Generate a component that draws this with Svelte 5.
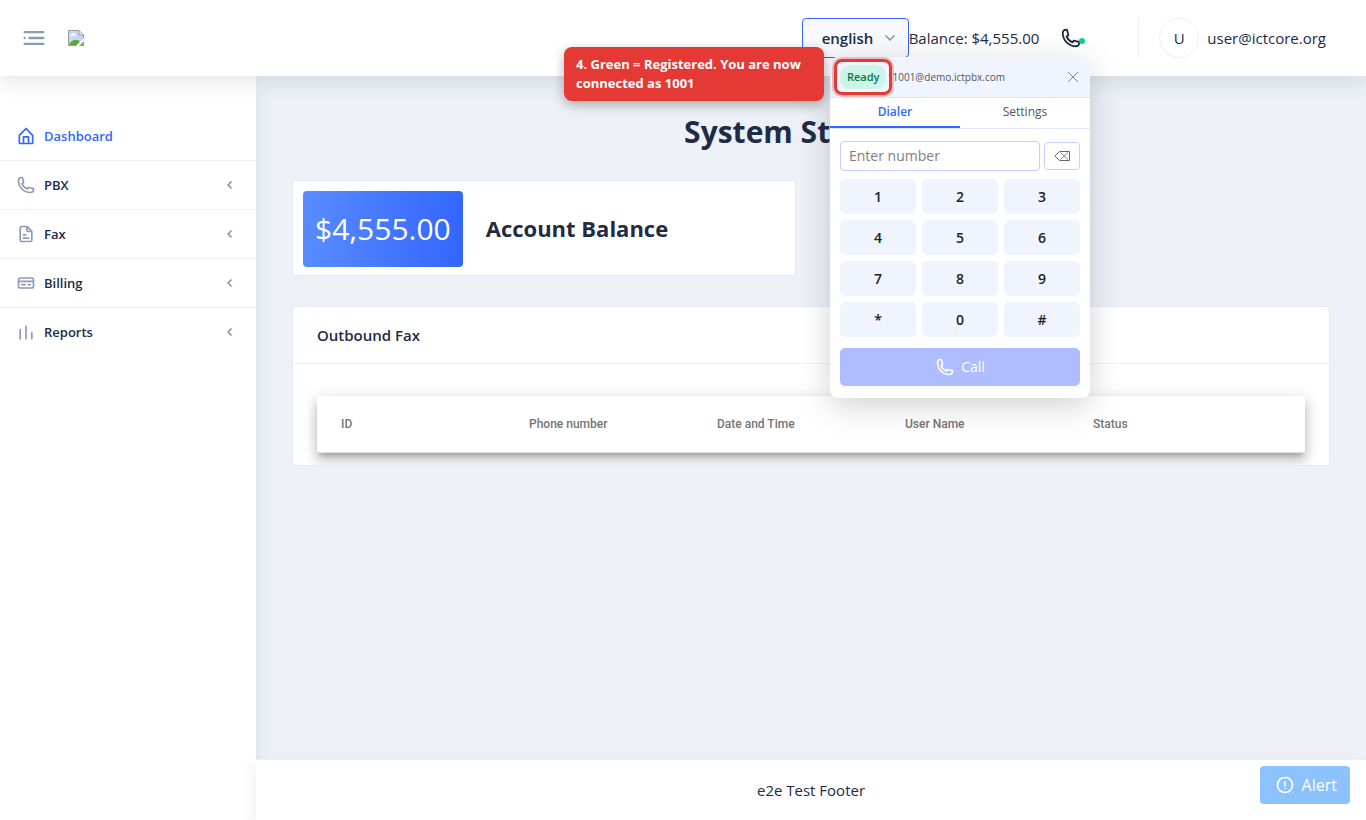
<script>
  let number = $state('');
  let language = $state('english');
  let tab = $state('Dialer');

  const phone =
    'M17.4 22A15.42 15.42 0 0 1 2 6.6 4.6 4.6 0 0 1 6.6 2a3.94 3.94 0 0 1 .77.07 3.79 3.79 0 0 1 .72.18 1 1 0 0 1 .65.75l1.37 6a1 1 0 0 1-.26.92c-.13.14-.14.15-1.37.79a9.91 9.91 0 0 0 4.87 4.89c.65-1.24.66-1.25.8-1.38a1 1 0 0 1 .92-.26l6 1.37a1 1 0 0 1 .72.65 4.34 4.34 0 0 1 .19.73 4.77 4.77 0 0 1 .06.76A4.6 4.6 0 0 1 17.4 22zM6.6 4A2.61 2.61 0 0 0 4 6.6 13.41 13.41 0 0 0 17.4 20a2.61 2.61 0 0 0 2.6-2.6v-.33L15.36 16l-.29.55c-.45.87-.78 1.5-1.62 1.16a11.85 11.85 0 0 1-7.18-7.21c-.36-.78.32-1.14 1.18-1.59L8 8.64 6.93 4z';

  const menu = [
    {
      title: 'Dashboard',
      active: true,
      icon: 'M20.42 10.18L12.71 2.3a1 1 0 0 0-1.42 0l-7.71 7.89A2 2 0 0 0 3 11.62V20a2 2 0 0 0 1.89 2h14.22A2 2 0 0 0 21 20v-8.38a2.07 2.07 0 0 0-.58-1.44zM10 20v-6h4v6zm9 0h-3v-7a1 1 0 0 0-1-1H9a1 1 0 0 0-1 1v7H5v-8.42l7-7.15 7 7.19z'
    },
    { title: 'PBX', icon: phone },
    {
      title: 'Fax',
      icon: 'M15 16H9a1 1 0 0 0 0 2h6a1 1 0 0 0 0-2zM9 14h3a1 1 0 0 0 0-2H9a1 1 0 0 0 0 2zM19.74 8.33l-5.44-6a1 1 0 0 0-.74-.33h-7A2.53 2.53 0 0 0 4 4.5v15A2.53 2.53 0 0 0 6.56 22h10.88A2.53 2.53 0 0 0 20 19.5V9a1 1 0 0 0-.26-.67zM14 5l2.74 3h-2a.79.79 0 0 1-.74-.85zm3.44 15H6.56a.53.53 0 0 1-.56-.5v-15a.53.53 0 0 1 .56-.5H12v3.15A2.79 2.79 0 0 0 14.71 10H18v9.5a.53.53 0 0 1-.56.5z'
    },
    {
      title: 'Billing',
      icon: 'M19 5H5a3 3 0 0 0-3 3v8a3 3 0 0 0 3 3h14a3 3 0 0 0 3-3V8a3 3 0 0 0-3-3zM4 8a1 1 0 0 1 1-1h14a1 1 0 0 1 1 1v1H4zm16 8a1 1 0 0 1-1 1H5a1 1 0 0 1-1-1v-5h16zM7 15h4a1 1 0 0 0 0-2H7a1 1 0 0 0 0 2zM15 15h2a1 1 0 0 0 0-2h-2a1 1 0 0 0 0 2z'
    },
    {
      title: 'Reports',
      icon: 'M12 4a1 1 0 0 0-1 1v15a1 1 0 0 0 2 0V5a1 1 0 0 0-1-1zM19 12a1 1 0 0 0-1 1v7a1 1 0 0 0 2 0v-7a1 1 0 0 0-1-1zM5 8a1 1 0 0 0-1 1v11a1 1 0 0 0 2 0V9a1 1 0 0 0-1-1z'
    }
  ];
  const columns = ['ID', 'Phone number', 'Date and Time', 'User Name', 'Status'];
  const keys = ['1', '2', '3', '4', '5', '6', '7', '8', '9', '*', '0', '#'];
</script>

<div class="layout">
  <header class="topbar">
    <div class="brand">
      <button class="plain" aria-label="Toggle menu">
        <svg width="28" height="28" viewBox="0 0 24 24" fill="#8f9bb3">
          <circle cx="4" cy="12" r="1" />
          <rect x="7" y="11" width="14" height="2" rx=".94" />
          <rect x="3" y="16" width="18" height="2" rx=".94" />
          <rect x="3" y="6" width="18" height="2" rx=".94" />
        </svg>
      </button>
      <a class="logo" href="#home" aria-label="Home">
        <svg width="16" height="16" viewBox="0 0 16 16">
          <path d="M.5.5h10.500l4.500 4.500v10.500H.5z" fill="#c6d9fb" />
          <path d="M2.500 5.800a1.400 1.400 0 0 1 1.500-1.600 1.700 1.700 0 0 1 3 .1 1 1 0 0 1 .9 1.500z" fill="#fff" />
          <path d="M1 15c1-3 3.500-5.200 6.500-5.200 2.500 0 3.600.8 4.500 1.700L8.500 15zM12 15l3-3v3z" fill="#56ad35" />
          <path d="M11 .5v4.500h4.500z" fill="#fff" />
          <path d="M11 .5H.5v15h15V5L11 .5V5h4.500" fill="none" stroke="#999" />
          <path d="M16 8v3l-5 5H8z" fill="#fff" />
        </svg>
      </a>
    </div>
    <div class="actions">
      <div class="language">
        <select aria-label="Language" bind:value={language}>
          <option>english</option>
        </select>
        <svg width="12" height="12" viewBox="0 0 12 12" fill="none" stroke="#8f9bb3" stroke-width="1.700" stroke-linecap="round" stroke-linejoin="round">
          <path d="M2 4l4 4 4-4" />
        </svg>
      </div>
      <span class="balance">Balance: $4,555.00</span>
      <button class="plain phone" aria-label="Phone">
        <svg width="22" height="22" viewBox="0 0 24 24" fill="#222b45"><path d={phone} /></svg>
        <i class="dot"></i>
      </button>
      <div class="user">
        <span class="avatar">U</span>
        <span>user@ictcore.org</span>
      </div>
    </div>

    <section class="dialer" aria-label="Phone dialer">
      <div class="dialer-head">
        <span class="ready">Ready</span>
        <span class="account">1001@demo.ictpbx.com</span>
        <button class="plain close" aria-label="Close">
          <svg width="12" height="12" viewBox="0 0 12 12" stroke="#888"><path d="M1 1l10 10M11 1L1 11" /></svg>
        </button>
      </div>
      <div class="tabs">
        {#each ['Dialer', 'Settings'] as name}
          <button class:selected={tab === name} onclick={() => (tab = name)}>{name}</button>
        {/each}
      </div>
      <div class="pad">
        <div class="entry">
          <input type="text" placeholder="Enter number" aria-label="Enter number" bind:value={number} />
          <button aria-label="Backspace" onclick={() => (number = number.slice(0, -1))}>
            <svg width="16" height="12" viewBox="0 0 16 12" fill="none" stroke="#666"><path d="M5.500 1.500h10v9h-10L.8 6z" /><path d="M6.500 2.500l7.500 7M14 2.500l-7.500 7" stroke-width=".8" /></svg>
          </button>
        </div>
        <div class="keys">
          {#each keys as key}
            <button onclick={() => (number += key)}>{key}</button>
          {/each}
        </div>
        <button class="call">
          <svg width="20" height="20" viewBox="0 0 24 24" fill="#fff"><path d={phone} /></svg>
          Call
        </button>
      </div>
    </section>

    <div class="callout">4. Green = Registered. You are now connected as 1001</div>
  </header>

  <nav class="sidebar">
    {#each menu as item}
      <a href="#{item.title}" class:active={item.active}>
        <svg width="20" height="20" viewBox="0 0 24 24" fill="currentColor"><path d={item.icon} /></svg>
        <span>{item.title}</span>
        {#if !item.active}
          <svg width="16" height="16" viewBox="0 0 16 16" fill="none" stroke="currentColor" stroke-width="1.800"><path d="M9.500 4.500L6.200 8l3.300 3.500" /></svg>
        {/if}
      </a>
    {/each}
  </nav>

  <div class="content">
    <main>
      <h1>System Statistics</h1>
      <div class="stats">
        <div class="card stat">
          <div class="amount">$4,555.00</div>
          <h2>Account Balance</h2>
        </div>
      </div>
      <section class="card fax">
        <h3>Outbound Fax</h3>
        <div class="card-body">
          <div class="table-wrap">
            <table>
              <thead>
                <tr>
                  {#each columns as column}<th scope="col">{column}</th>{/each}
                </tr>
              </thead>
            </table>
          </div>
        </div>
      </section>
    </main>
    <footer>e2e Test Footer</footer>
  </div>

  <button class="alert">
    <svg width="20" height="20" viewBox="0 0 24 24" fill="#fff">
      <path d="M12 2a10 10 0 1 0 10 10A10 10 0 0 0 12 2zm0 18a8 8 0 1 1 8-8 8 8 0 0 1-8 8z" />
      <circle cx="12" cy="16" r="1" />
      <path d="M12 7a1 1 0 0 0-1 1v5a1 1 0 0 0 2 0V8a1 1 0 0 0-1-1z" />
    </svg>
    Alert
  </button>
</div>

<style>
  :global(body) {
    margin: 0;
    background: #edf1f7;
  }
  .layout,
  .layout * {
    box-sizing: border-box;
  }
  .layout {
    display: grid;
    grid-template-columns: 256px 1fr;
    grid-template-rows: auto 1fr;
    min-height: 100vh;
    color: #222b45;
    font-family: 'Open Sans', sans-serif;
    font-size: 15px;
    line-height: 20px;
  }
  button,
  input,
  select {
    font: inherit;
    color: inherit;
  }
  button {
    cursor: pointer;
  }
  svg {
    display: block;
    flex: none;
  }
  h1,
  h2,
  h3 {
    margin: 0;
  }
  .plain {
    padding: 0;
    border: 0;
    background: none;
  }

  .topbar {
    position: relative;
    z-index: 4;
    grid-column: 1 / -1;
    display: flex;
    align-items: center;
    justify-content: space-between;
    padding: 18px 40px 18px 20px;
    background: #fff;
    box-shadow: 0 8px 16px 0 rgba(44, 51, 73, 0.1);
  }
  .brand,
  .actions,
  .user {
    display: flex;
    align-items: center;
  }
  .brand {
    gap: 20px;
  }
  .language {
    position: relative;
  }
  .language select {
    display: block;
    width: 107px;
    height: 40px;
    padding: 0 32px 0 19px;
    border: 1px solid #36f;
    border-radius: 4px;
    background: #f7f9fc;
    appearance: none;
    font-weight: 600;
    outline: none;
  }
  .language svg {
    position: absolute;
    right: 13px;
    top: 14px;
    pointer-events: none;
  }
  .phone {
    position: relative;
    margin-left: 21px;
  }
  .dot {
    position: absolute;
    right: -3px;
    bottom: 5px;
    width: 6px;
    height: 6px;
    border-radius: 50%;
    background: #00d68f;
  }
  .user {
    gap: 8px;
    height: 40px;
    margin-left: 56px;
    padding-left: 20px;
    border-left: 1px solid #edf1f7;
  }
  .avatar {
    width: 40px;
    height: 40px;
    border: 1px solid #edf1f7;
    border-radius: 50%;
    line-height: 38px;
    text-align: center;
  }

  .dialer {
    position: absolute;
    top: 57px;
    right: 276px;
    width: 260px;
    border-radius: 8px;
    background: #fff;
    box-shadow: 0 8px 32px rgba(0, 0, 0, 0.18);
    color: #222;
  }
  .dialer-head {
    display: flex;
    align-items: center;
    gap: 6px;
    height: 41px;
    padding: 0 11px 0 10px;
    border-bottom: 1px solid #dde5ff;
    border-radius: 8px 8px 0 0;
    background: #f0f4ff;
  }
  .ready {
    position: relative;
    padding: 2px 7px;
    border-radius: 10px;
    background: #ccf5e7;
    color: #007a51;
    font-size: 11px;
    font-weight: 600;
  }
  .ready::after {
    content: '';
    position: absolute;
    inset: -6px;
    border: 3px solid #e53935;
    border-radius: 8px;
    box-shadow: 0 0 0 2px rgba(229, 57, 53, 0.3);
  }
  .account {
    flex: 1;
    color: #555;
    font-size: 10px;
  }
  .tabs {
    display: flex;
    border-bottom: 1px solid #dde5ff;
  }
  .tabs button {
    flex: 1;
    padding: 4px 0;
    border: 0;
    border-bottom: 2px solid transparent;
    background: none;
    color: #555;
    font-size: 12px;
  }
  .tabs button.selected {
    border-color: #36f;
    color: #36f;
    font-weight: 600;
  }
  .pad {
    display: grid;
    gap: 8px;
    padding: 12px 10px;
  }
  .entry {
    display: flex;
    align-items: center;
    gap: 4px;
  }
  .entry input {
    flex: 1;
    min-width: 0;
    height: 30px;
    padding: 0 8px 2px;
    border: 1px solid #c5d0ff;
    border-radius: 4px;
    background: #fff;
    font-size: 14px;
  }
  .entry input::placeholder {
    color: #808080;
  }
  .entry button {
    display: grid;
    place-items: center;
    width: 36px;
    height: 28px;
    padding: 0;
    border: 1px solid #c5d0ff;
    border-radius: 4px;
    background: #fff;
  }
  .keys {
    display: grid;
    grid-template-columns: repeat(3, 1fr);
    gap: 6px;
  }
  .keys button {
    height: 35px;
    padding: 0;
    border: 0;
    border-radius: 5px;
    background: #f0f4ff;
    font-size: 14px;
    font-weight: 600;
  }
  .call {
    display: flex;
    align-items: center;
    justify-content: center;
    gap: 6px;
    height: 38px;
    margin-top: 3px;
    border: 0;
    border-radius: 5px;
    background: #adbdff;
    color: #fff;
    font-size: 14px;
    font-weight: 500;
  }
  .callout {
    position: absolute;
    top: 47px;
    right: 542px;
    width: 260px;
    padding: 8px 12px;
    border-radius: 8px;
    background: #e53935;
    box-shadow: 0 4px 12px rgba(0, 0, 0, 0.3);
    color: #fff;
    font-size: 13px;
    font-weight: 700;
    line-height: 19px;
  }

  .sidebar {
    position: relative;
    z-index: 2;
    padding-top: 36px;
    background: #fff;
    box-shadow: 0 8px 16px 0 rgba(44, 51, 73, 0.1);
  }
  .sidebar a {
    display: flex;
    align-items: center;
    gap: 8px;
    padding: 14px 18px 14px 16px;
    border-bottom: 1px solid #edf1f7;
    color: #222b45;
    font-size: 13px;
    font-weight: 600;
    text-decoration: none;
  }
  .sidebar a:last-child {
    border-bottom: 0;
  }
  .sidebar span {
    flex: 1;
  }
  .sidebar svg {
    color: #8f9bb3;
  }
  .sidebar .active,
  .sidebar .active svg {
    color: #36f;
  }

  .content {
    display: flex;
    flex-direction: column;
    min-width: 0;
  }
  main {
    flex: 1;
    padding: 36px;
  }
  h1 {
    margin-bottom: 28px;
    font-size: 30px;
    font-weight: 700;
    line-height: 40px;
    text-align: center;
  }
  .card {
    border: 1px solid #e4e9f2;
    border-radius: 4px;
    background: #fff;
  }
  .stats {
    display: grid;
    grid-template-columns: 1fr 1fr;
    gap: 30px;
    margin-bottom: 30px;
  }
  .stat {
    display: flex;
    align-items: center;
    gap: 23px;
    padding: 10px 10px 8px;
  }
  .amount {
    padding: 18px 12px;
    border-radius: 4px;
    background: linear-gradient(to right, #598bff, #36f);
    color: #fff;
    font-size: 30px;
    line-height: 40px;
  }
  h2 {
    padding-bottom: 2px;
    font-size: 22px;
    line-height: 32px;
  }
  .fax {
    overflow: hidden;
  }
  h3 {
    padding: 16px 24px;
    border-bottom: 1px solid #edf1f7;
    font-size: 15px;
    font-weight: 600;
    line-height: 24px;
  }
  .card-body {
    padding: 32px 24px 12px;
  }
  .table-wrap {
    padding: 0 24px;
    border-bottom: 1px solid #e0e0e0;
    background: #fff;
    box-shadow:
      0 5px 5px -3px rgba(0, 0, 0, 0.2),
      0 8px 10px 1px rgba(0, 0, 0, 0.14),
      0 3px 14px 2px rgba(0, 0, 0, 0.12);
  }
  table {
    width: 100%;
    border-collapse: collapse;
    table-layout: fixed;
  }
  th {
    height: 56px;
    padding: 0;
    color: #757575;
    font-family: Roboto, sans-serif;
    font-size: 12px;
    font-weight: 500;
    text-align: left;
  }
  footer {
    position: relative;
    z-index: 3;
    padding: 20px;
    border-top: 1px solid #edf1f7;
    background: #fff;
    box-shadow: 0 8px 16px 0 rgba(44, 51, 73, 0.1);
    text-align: center;
  }
  .alert {
    position: fixed;
    z-index: 5;
    right: 16px;
    bottom: 16px;
    display: flex;
    align-items: center;
    gap: 7px;
    height: 38px;
    padding: 0 13px 0 15px;
    border: 0;
    border-radius: 4px;
    background: #8cc2ff;
    color: #fff;
    font-size: 16px;
  }
</style>
